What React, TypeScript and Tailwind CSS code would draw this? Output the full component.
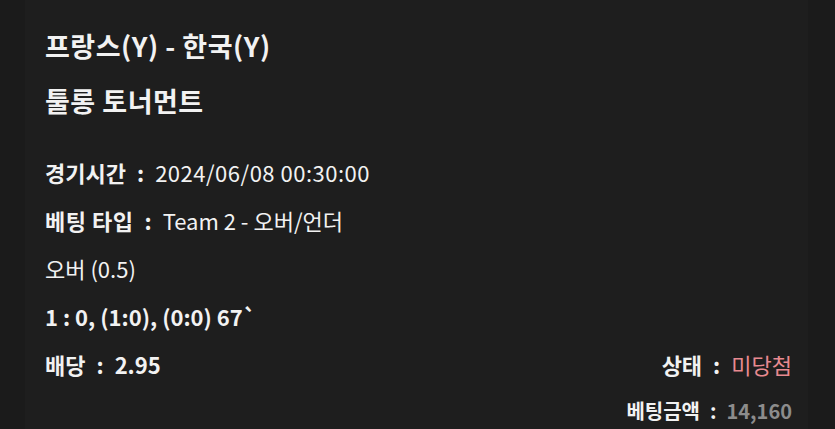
export default function App() {
  return (
    <div
      className="w-[835px] h-[429px] overflow-hidden bg-[#1b1b1b] pl-[25px] pr-[27px] text-[#f2f2f2]"
      style={{ fontFamily: '"Noto Sans CJK KR", "Noto Sans", sans-serif' }}
    >
      <div className="h-full bg-[#1e1e1e] pl-5 pr-4 pt-[18px]">
        {/* Title */}
        <div className="text-[27px] font-bold leading-[55px] tracking-[0.5px]">프랑스(Y) - 한국(Y)</div>
        <div className="text-[27px] font-bold leading-[55px] tracking-[0.5px]">툴롱 토너먼트</div>

        {/* Details */}
        <div className="mt-[20px] text-[22px] leading-[48px]">
          <div>
            <span className="font-bold">경기시간</span>
            <span className="font-bold mx-[11px]">:</span>
            <span className="tracking-[0.5px]">2024/06/08 00:30:00</span>
          </div>
          <div>
            <span className="font-bold tracking-[0.5px]">베팅 타입</span>
            <span className="font-bold mx-[11px]">:</span>
            <span>Team 2 - 오버/언더</span>
          </div>
          <div>오버 (0.5)</div>
          <div className="font-semibold">1 : 0, (1:0), (0:0) 67`</div>
          <div className="flex justify-between">
            <div className="font-bold">
              <span>배당</span>
              <span className="mx-[11px]">:</span>
              <span>2.95</span>
            </div>
            <div className="font-bold">
              <span>상태</span>
              <span className="mx-[11px]">:</span>
              <span className="font-normal text-[#e88a90]">미당첨</span>
            </div>
          </div>
          <div className="flex justify-end text-[20px] leading-[46px] font-bold">
            <span>베팅금액</span>
            <span className="mx-[10px]">:</span>
            <span className="text-[#8c8c8c]">14,160</span>
          </div>
        </div>
      </div>
    </div>
  )
}
